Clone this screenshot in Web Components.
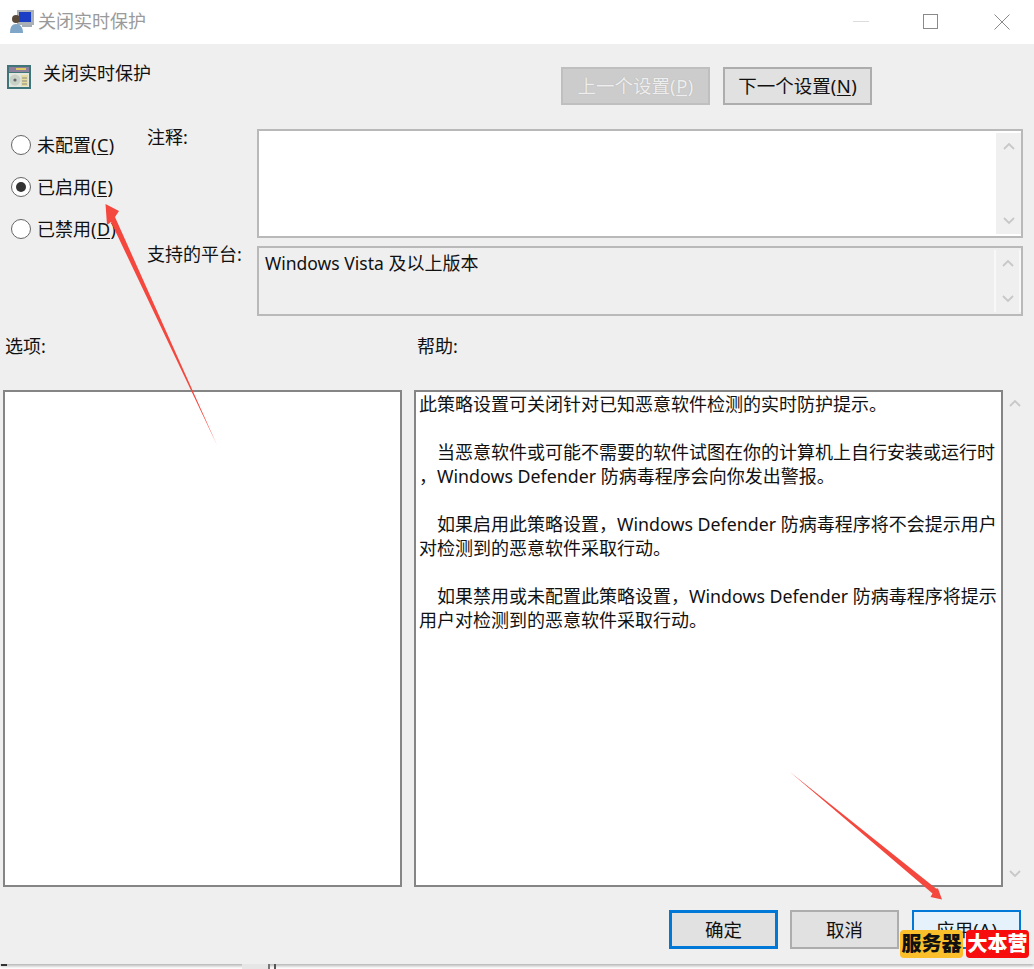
<!DOCTYPE html>
<html lang="zh-CN"><head><meta charset="utf-8"><style>
html,body{margin:0;padding:0;background:#fff}
body{font:18px/24px "Noto Sans","Noto Sans CJK SC",sans-serif;color:#111;text-spacing-trim:space-all}
.la{font-size:17.8px;line-height:1}
</style></head><body>
<policy-dialog>
  <span slot="title">关闭实时保护</span>
  <span slot="heading">关闭实时保护</span>
  <p>此策略设置可关闭针对已知恶意软件检测的实时防护提示。</p>
  <p>&#12288;当恶意软件或可能不需要的软件试图在你的计算机上自行安装或运行时<br>，<span class="la">Windows Defender</span> 防病毒程序会向你发出警报。</p>
  <p>&#12288;如果启用此策略设置，<span class="la">Windows Defender</span> 防病毒程序将不会提示用户<br>对检测到的恶意软件采取行动。</p>
  <p>&#12288;如果禁用或未配置此策略设置，<span class="la">Windows Defender</span> 防病毒程序将提示<br>用户对检测到的恶意软件采取行动。</p>
</policy-dialog>
<script>
const chev = (d) => `<svg width="12" height="8" viewBox="0 0 12 8"><path d="${d==='up'?'M1 7L6 2L11 7':'M1 1L6 6L11 1'}" fill="none" stroke="#c8c8c8" stroke-width="1.8"/></svg>`;

class WinRadio extends HTMLElement{
  constructor(){super();const c=this.hasAttribute('checked');
    this.attachShadow({mode:'open'}).innerHTML=`<style>
    :host{display:flex;align-items:center;gap:6px;height:42px}
    .r{width:20px;height:20px;box-sizing:border-box;border:1.5px solid #666;border-radius:50%;background:#fff;display:grid;place-items:center;flex:none}
    .d{width:10px;height:10px;border-radius:50%;background:#333}
    </style><span class="r">${c?'<span class="d"></span>':''}</span><span><slot></slot></span>`;}
}
customElements.define('win-radio',WinRadio);

class WinButton extends HTMLElement{
  constructor(){super();
    this.attachShadow({mode:'open'}).innerHTML=`<style>
    :host{display:grid;place-items:center;box-sizing:border-box;width:var(--w,109px);height:var(--h,39px);background:#e1e1e1;border:2px solid #adadad;color:#111;font-size:18.5px}
    :host([disabled]){background:#cccccc;border-color:#bfbfbf;color:#eee;text-shadow:0 0 1px #a8a8a8}
    :host([primary]){border:3px solid #0078d7}
    :host([hot]){background:#e5f1fb;border-color:#0078d7}
    </style><span><slot></slot></span>`;}
}
customElements.define('win-button',WinButton);

class WinField extends HTMLElement{
  constructor(){super();
    this.attachShadow({mode:'open'}).innerHTML=`<style>
    :host{display:flex;box-sizing:border-box;border:2px solid #b9b9b9;background:#fff}
    :host([readonly]){background:#efefef}
    .t{flex:1;padding:3px 6px;line-height:24px}
    .s{width:25px;margin:2px 0;background:#f0f0f0;display:flex;flex-direction:column;justify-content:space-between;align-items:center;padding:9px 0;box-sizing:border-box}
    :host([readonly]) .s{border-left:2px solid #f8f8f8;border-right:2px solid #f8f8f8;width:27px;background:#efefef}
    </style><div class="t"><slot></slot></div><div class="s">${chev('up')}${chev('down')}</div>`;}
}
customElements.define('win-field',WinField);

class PolicyDialog extends HTMLElement{
  constructor(){super();
    this.attachShadow({mode:'open'}).innerHTML=`<style>
    :host{display:flex;flex-direction:column;position:relative;width:1034px;height:969px;overflow:hidden;background:#fff}
    header{height:44px;flex:none;display:flex;align-items:center;background:#fff;color:#9a9a9a;font-size:18px;position:relative;z-index:1}
    header .ico{margin:0 4px 0 10px;display:block}
    header .ttl{flex:1;margin-top:-3px}
    .ctl{height:44px;display:grid;place-items:center}
    .c1{width:62px}.c2{width:77px}.c3{width:65px}
    main{flex:none;height:920px;box-sizing:border-box;background:#efefef;box-shadow:0 2px 3px rgba(0,0,0,.3);display:flex;flex-direction:column;padding:0 0 0 3px}
    .top{display:flex;height:85px;flex:none}
    .head{width:558px;display:flex;gap:12px;padding:17px 0 0 4px;box-sizing:border-box}
    .nav{display:flex;gap:13px;padding-top:23px;--w:149px;--h:38px}
    .mid{display:flex;height:205px;flex:none}
    .radios{width:144px;box-sizing:border-box;padding-left:8px;margin-top:-5px}
    .labels{width:110px;display:flex;flex-direction:column;margin-top:-4px}
    .labels span:first-child{height:117px}
    .fields{display:flex;flex-direction:column;gap:8px;width:766px}
    .c{height:109px}.p{height:70px}
    .la{font-size:17.5px;line-height:1}
    .caps{display:flex;height:56px;flex:none}
    .caps span:first-child{width:414px;padding-left:2px;box-sizing:border-box}
    .lists{display:flex;height:497px;flex:none;gap:12px}
    .box{box-sizing:border-box;border:2px solid #858585;background:#fff;height:497px}
    .l{width:399px}
    .h{width:589px;padding:0 4px 0 3px;overflow:hidden}
    ::slotted(p){margin:0 0 24px;white-space:nowrap}
    .vs{width:24px;display:flex;flex-direction:column;justify-content:space-between;align-items:center;padding:9px 0;box-sizing:border-box;margin-left:-12px}
    .acts{display:flex;justify-content:flex-end;gap:12px;padding:23px 13px 0 0}
    .acts win-button[hot]{margin-left:1px}
    .ov{position:absolute;left:0;top:0;pointer-events:none}
    .wm{position:absolute;left:900px;top:930px;display:flex;gap:3px;font-size:20px;font-weight:900;line-height:28px}
    .wm b{display:block;box-sizing:border-box;width:63px;text-align:center;border-radius:4px}
    .y{background:#fbbf2c;color:#111}.rd{background:#f70d0d;color:#fff}
    .frag{position:absolute;top:964px;height:5px}
    u{text-underline-offset:2px;margin:0 .5px}
    </style>
    <header>
      <svg class="ico" width="24" height="24" viewBox="0 0 24 24"><rect x="7" y="0" width="17" height="15" fill="#a9b0b6"/><rect x="9" y="2" width="12" height="10" fill="#1b3fc4"/><rect x="12" y="15" width="10" height="2" fill="#a4acb4"/><circle cx="6" cy="9" r="4" fill="#5a4a3a"/><path d="M0 23c0-6 2-9 6-9s7 3 7 9z" fill="#7fa6c6"/></svg>
      <span class="ttl"><slot name="title"></slot></span>
      <span class="ctl c1"><svg width="16" height="2"><rect width="16" height="1" fill="#dcdcdc"/></svg></span>
      <span class="ctl c2"><svg width="16" height="16"><rect x=".5" y=".5" width="14" height="14" fill="none" stroke="#8a8a8a"/></svg></span>
      <span class="ctl c3"><svg width="16" height="16"><path d="M.5.5L15.5 15.5M15.5.5L.5 15.5" stroke="#8a8a8a" fill="none"/></svg></span>
    </header>
    <main>
      <div class="top">
        <div class="head">
          <svg width="24" height="24" viewBox="0 0 24 24" style="margin-top:4px;flex:none"><rect width="24" height="24" fill="#3f7478"/><rect x="2" y="2" width="20" height="5" fill="#8d7f9c"/><rect x="9" y="3" width="10" height="2" fill="#e0c860"/><rect x="2" y="8" width="20" height="14" fill="#e4e6dc"/><circle cx="8" cy="15" r="5.5" fill="#c8d0c8"/><circle cx="8" cy="15" r="1.6" fill="#666"/><rect x="14" y="10" width="7" height="11" fill="#e8dc9a"/><path d="M15 13h5M15 16h5M15 19h5" stroke="#888" stroke-width="1"/></svg>
          <span><slot name="heading"></slot></span>
        </div>
        <div class="nav">
          <win-button disabled>上一个设置(<u>P</u>)</win-button>
          <win-button>下一个设置(<u>N</u>)</win-button>
        </div>
      </div>
      <div class="mid">
        <div class="radios">
          <win-radio>未配置(<u>C</u>)</win-radio>
          <win-radio checked>已启用(<u>E</u>)</win-radio>
          <win-radio>已禁用(<u>D</u>)</win-radio>
        </div>
        <div class="labels"><span>注释:</span><span>支持的平台:</span></div>
        <div class="fields">
          <win-field class="c"></win-field>
          <win-field class="p" readonly><span class="la">Windows Vista</span> 及以上版本</win-field>
        </div>
      </div>
      <div class="caps"><span>选项:</span><span>帮助:</span></div>
      <div class="lists">
        <div class="box l"></div>
        <div class="box h"><slot></slot></div>
        <div class="vs">${chev('up')}${chev('down')}</div>
      </div>
      <div class="acts">
        <win-button primary>确定</win-button>
        <win-button>取消</win-button>
        <win-button hot>应用(<u>A</u>)</win-button>
      </div>
    </main>
    <div class="frag" style="left:242px;width:26px;background:#e6e6e6"></div>
    <div class="frag" style="left:268px;width:2px;background:#777"></div>
    <div class="frag" style="left:274px;width:2px;background:#555"></div>
    <div class="frag" style="left:1px;width:6px;height:2px;background:#333"></div>
    <svg class="ov" width="1034" height="969" viewBox="0 0 1034 969">
      <path d="M217 445L115 217L119 211L105.5 204L107 225L111 222Z" fill="#f4483f"/>
      <path d="M790 772L936 888.5L938 888.5L942 899.5L930.5 897L932.5 893.5Z" fill="#f4483f"/>
    </svg>
    <div class="wm"><b class="y">服务器</b><b class="rd">大本营</b></div>`;}
}
customElements.define('policy-dialog',PolicyDialog);
</script>
</body></html>
